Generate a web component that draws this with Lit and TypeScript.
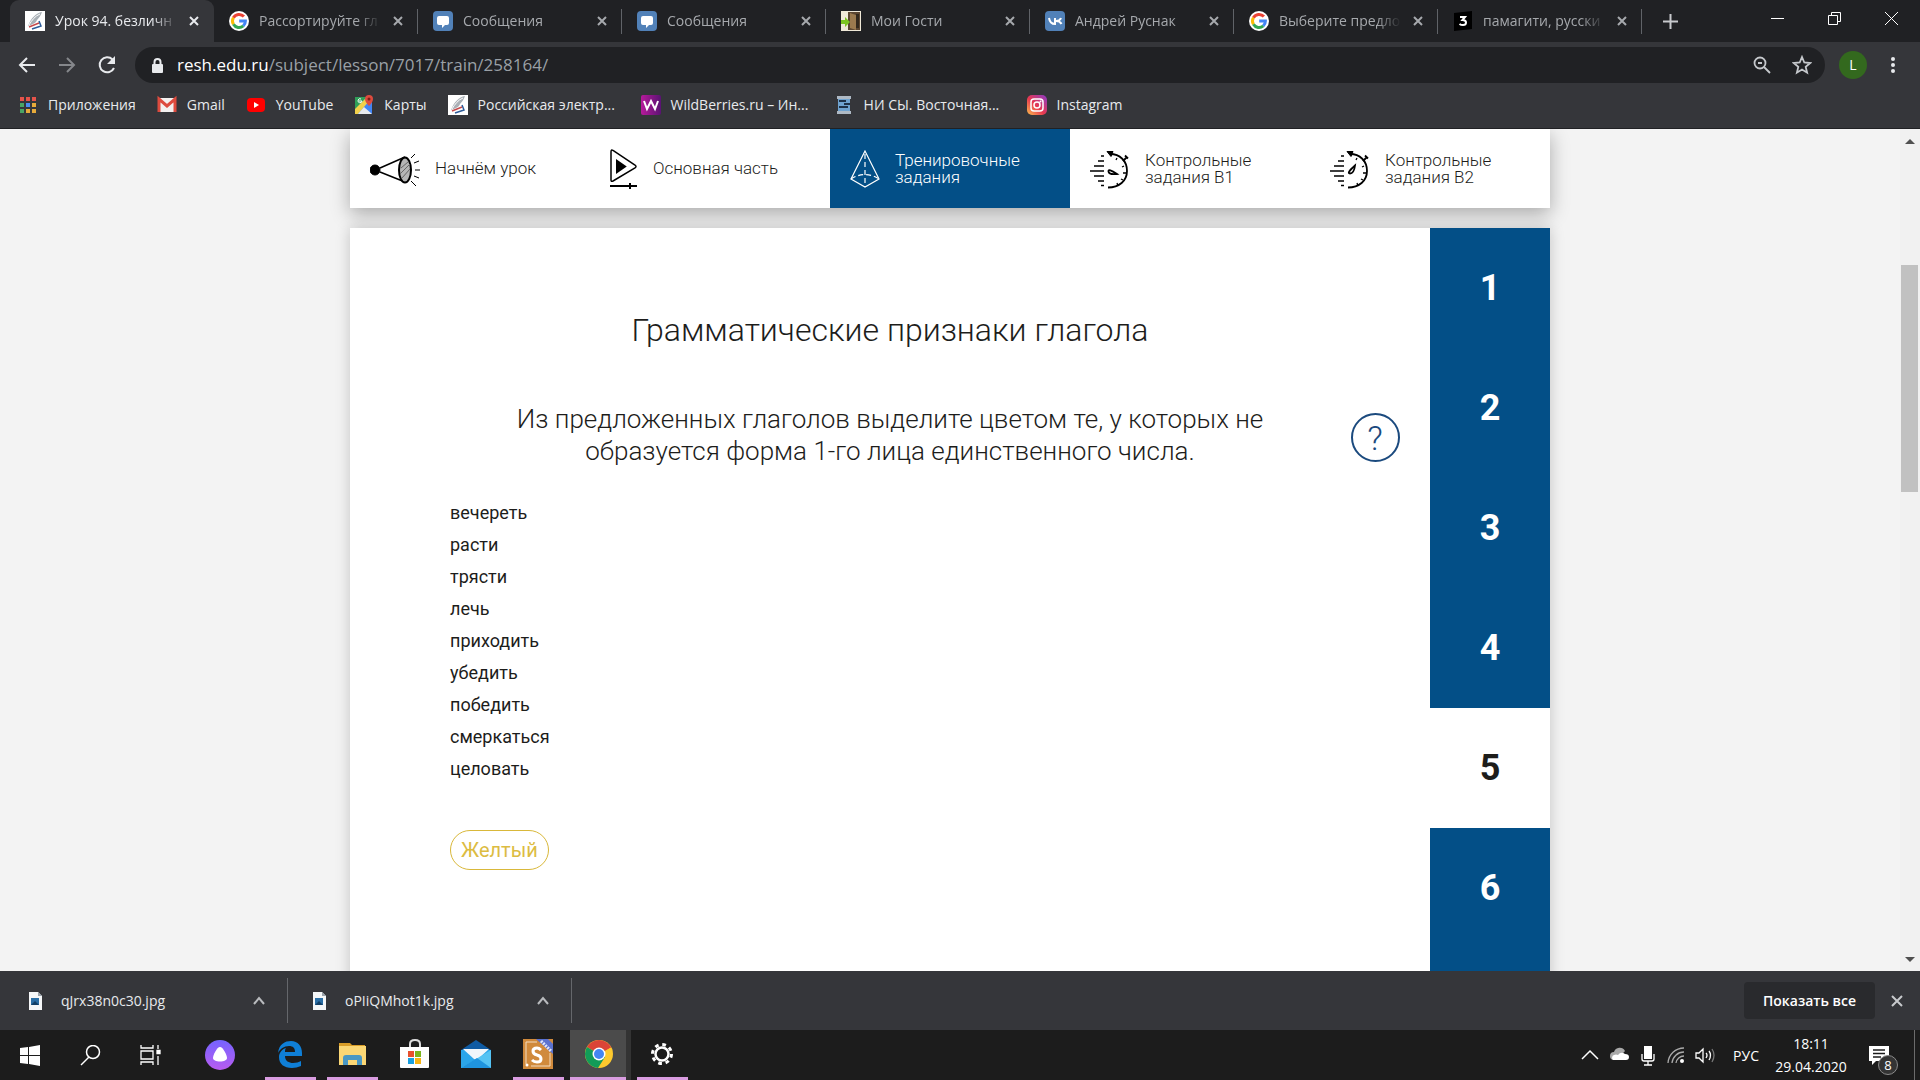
import { LitElement, html, css, svg } from "lit";
import { customElement, state } from "lit/decorators.js";
import { classMap } from "lit/directives/class-map.js";

const google = svg`<circle cx="10" cy="10" r="10" fill="#fff"/>
  <g fill="none" stroke-width="3">
    <path d="M14.9 5.6A6.5 6.5 0 0 0 4.4 6.7" stroke="#ea4335"/>
    <path d="M4.4 6.7a6.5 6.5 0 0 0 0 6.6" stroke="#fbbc05"/>
    <path d="M4.4 13.3a6.5 6.5 0 0 0 9.9 1.6" stroke="#34a853"/>
    <path d="M14.3 14.9A6.5 6.5 0 0 0 16.4 10H10.2" stroke="#4285f4"/>
  </g>`;
const resh = svg`<path d="M0 0h20v20H0z" fill="#fff"/>
  <path d="M17 1C11 2 6 7 3 15c5-2 8-3 9-6 2-2 4-5 5-8z" fill="#a9b0b6"/>
  <path d="M15 3C10 5 7 9 4 14" stroke="#fff" fill="none"/>
  <path d="M4 16l10-4" stroke="#c5484a" stroke-width="1.500"/>
  <path d="M7 18l9-3-2-5" stroke="#2d5c9a" stroke-width="1.500" fill="none"/>`;
const message = svg`<rect width="20" height="20" rx="4" fill="#5181b8"/>
  <path d="M6 5h8q2 0 2 2v5q0 2-2 2h-2l-3 3v-3H6q-2 0-2-2V7q0-2 2-2z" fill="#fff"/>`;
const door = svg`<path d="M0 0h20v20H0z" fill="#efe9d8"/><path d="M7 1h12v18H7z" fill="#5b4630"/>
  <path d="M9 2l6 2v15l-6-2z" fill="#9b7a4e"/><path d="M15 3h3v14h-3z" fill="#33291d"/>
  <path d="M0 9h4V6l5 5-5 5v-3H0z" fill="#7cc520"/>`;
const vk = svg`<rect width="20" height="20" rx="4" fill="#5181b8"/>
  <path d="M4 7q1 6 6 6V7M16 7q-1 3-5 3 4 0 5.500 3" fill="none" stroke="#fff" stroke-width="2"/>`;
const znanija = svg`<path d="M1 2l18-2v18L1 20z" fill="#000"/>
  <path d="M7 6h5L9.500 9q3.500 0 3.500 2.500T10 14q-2 0-3.500-1" fill="none" stroke="#fff" stroke-width="2"/>`;
const apps = svg`${["#e5534a", "#e5534a", "#e5534a", "#4aa564", "#4a8df0", "#e8ab3a", "#4aa564", "#e8ab3a", "#e8ab3a"].map(
  (c, i) => svg`<rect x=${2 + (i % 3) * 6} y=${2 + Math.floor(i / 3) * 6} width="4" height="4" fill=${c}/>`
)}`;
const gmail = svg`<rect x="1" y="3" width="18" height="14" rx="1" fill="#f3f0ef"/>
  <path d="M2 17V4l8 7 8-7v13" fill="none" stroke="#dd4b3e" stroke-width="3"/>`;
const youtube = svg`<rect x="1" y="3" width="18" height="14" rx="4" fill="#f00"/><path d="M8 7l5 3-5 3z" fill="#fff"/>`;
const maps = svg`<rect x="1" y="2" width="17" height="17" rx="1" fill="#4285f4"/>
  <path d="M1 2h12L1 15z" fill="#2f9e58"/><path d="M1 19v-5L13 2l3 3L4 19z" fill="#f2d04b"/>
  <path d="M4 19l6-7 8 7z" fill="#e8eaed"/><path d="M18 9v8l-6-6z" fill="#4285f4"/>
  <path d="M15 0a4 4 0 0 1 4 4q0 3-4 7-4-4-4-7a4 4 0 0 1 4-4z" fill="#dd4b3e"/><circle cx="15" cy="4" r="1.500" fill="#7d1f18"/>
  <path d="M5 6h3a2 2 0 1 1-1-2" fill="none" stroke="#fff"/>`;
const wildberries = svg`<defs><linearGradient id="wb"><stop stop-color="#b71a9b"/><stop offset="1" stop-color="#5a1373"/></linearGradient></defs>
  <rect width="20" height="20" rx="2" fill="url(#wb)"/>
  <path d="M3 6l3 8 4-8 4 8 3-8" fill="none" stroke="#fff" stroke-width="2"/>`;
const scroll = svg`<path d="M3 1h14v3H3zM3 16h14v3H3z" fill="#aeb9c4"/><path d="M4 4h12v12H4z" fill="#6fa3d0"/>
  <path d="M5 6h7M10 9h6M5 12h9" stroke="#1e3248" stroke-width="2"/>`;
const instagram = svg`<defs><linearGradient id="ig" x1="0" y1="1" x2="1" y2="0"><stop stop-color="#fdc04d"/><stop offset=".45" stop-color="#e8384f"/><stop offset="1" stop-color="#8a3ac8"/></linearGradient></defs>
  <rect width="20" height="20" rx="5" fill="url(#ig)"/>
  <g fill="none" stroke="#fff" stroke-width="1.500"><rect x="4" y="4" width="12" height="12" rx="3"/><circle cx="10" cy="10" r="3"/></g><circle cx="13.500" cy="6.500" r="1" fill="#fff"/>`;
const imageFile = svg`<path d="M4 1h9l4 4v14H4z" fill="#f5f7f8"/><path d="M13 1l4 4h-4z" fill="#9aa3ab"/>
  <path d="M6 7h8v7H6z" fill="#2a6ea5"/><path d="M6 14l4-4 4 4z" fill="#123f66"/>`;

const megaphone = svg`<g stroke="#000" fill="none"><circle cx="5" cy="21" r="5" fill="#000"/>
  <path d="M10 19L35 8M10 23l25 10" stroke-width="1.500"/><ellipse cx="35" cy="21" rx="6" ry="12.500" fill="#b5b5b5" stroke-width="2"/>
  <path d="M31 19l7-6M30 25l10-10M32 29l8-9" stroke="#666"/>
  <path d="M41 9l4-4M44 14l5-2M45 21h5M44 27l5 2M41 32l5 5"/></g>`;
const player = svg`<g stroke="#000" fill="none"><path d="M1 3v28q0 2 2 1L25 19q2-1.500 0-3L3 1.500Q1 0 1 3z" stroke-width="1.500"/>
  <path d="M7 12v11l8-5.500z" fill="#000" stroke-width="2"/><path d="M0 37h27M20 34v6" stroke-width="2"/></g>`;
const pyramid = svg`<g stroke="#fff" fill="none" stroke-width="1.200"><path d="M15 2L1 30l14 8 14-8z"/>
  <path d="M15 5v33M1 30q14-9 28 0" stroke-dasharray="5 3"/></g>`;
const timer = (hand: unknown) => svg`<g stroke="#000" fill="none" stroke-width="1.800">
  <path d="M20 5C30 5 37 12 37 22S29 38.500 18 38.500"/><path d="M17 2.500h6l-2 5z" fill="#000" stroke-width="1"/><path d="M33 12l4-4M35 6.500l3 3"/>
  <path d="M11 7h3M8 12h6M4 17h10M0 22h14M4 27h10M8 32h6M11 36.500h3" stroke-width="1.600"/>
  <path d="M27 9l-1 2M34 17l-2 1M36 24h-3M33 31l-2-1M28 37l-1-3" stroke-width="1.300"/>${hand}</g>`;
const timer1 = timer(svg`<path d="M27 25q-8 1-8.500-2.500t8.500 2.500z"/>`);
const timer2 = timer(svg`<path d="M25 16.500q-1 8-5 8t5-8z"/>`);

const start = svg`<path d="M0 3l8-1v8H0zM9 2l11-2v10H9zM0 11h8v8l-8-1zM9 11h11v10L9 19z" fill="#fff"/>`;
const search = svg`<g fill="none" stroke="#fff" stroke-width="1.500"><circle cx="13" cy="7" r="6.500"/><path d="M9 12l-8 8"/></g>`;
const taskView = svg`<g fill="none" stroke="#fff" stroke-width="1.300"><path d="M1 0v3h12V0M1 20v-3h12v3M1 6h12v8H1zM18 0v4M18 11v9"/><path d="M17 5.500h3v3h-3z" fill="#fff"/></g>`;
const alice = svg`<defs><linearGradient id="al" x1="0" y1="0" x2="0" y2="1"><stop stop-color="#7563ff"/><stop offset="1" stop-color="#b85cf0"/></linearGradient></defs>
  <circle cx="15" cy="15" r="15" fill="url(#al)"/><path d="M15 7c3 0 7 8 7 11 0 2-3 3.500-7 3.500S8 20 8 18c0-3 4-11 7-11z" fill="#fff"/>`;
const edge = svg`<path d="M3 14C4 5 10 2 16 2c7 0 11 5 11 12v3H10c0 5 4 7 8 7 3 0 6-1 8-2v5c-3 1-6 2-9 2-8 0-13-4-13-11 0-4 3-8 7-9-1 1-1 3-1 4h10c0-4-2-6-6-6-5 0-9 3-11 7z" fill="#0f7fd7"/>`;
const explorer = svg`<path d="M1 4h11l2 2h13v5H1z" fill="#d99d28"/><path d="M1 7h27v19H1z" fill="#fbd775"/>
  <path d="M5 26v-7q0-3 3-3h13q3 0 3 3v7h-5v-5h-9v5z" fill="#4a98c4"/>`;
const store = svg`<path d="M10 8V5q0-4 5-4t5 4v3" fill="none" stroke="#ddd" stroke-width="2"/>
  <path d="M0 8h29v20q0 1-1 1H1q-1 0-1-1z" fill="#fff"/><path d="M8 12h6v6H8z" fill="#e8502d"/><path d="M15 12h6v6h-6z" fill="#7ab51d"/>
  <path d="M8 19h6v6H8z" fill="#19a0e0"/><path d="M15 19h6v6h-6z" fill="#f8b414"/>`;
const mail = svg`<path d="M0 11L15 1l15 10v3H0z" fill="#0f5ba3"/><path d="M0 11h30v18H0z" fill="#2ba6ea"/>
  <path d="M2 10h26L17 20q-2 1-4 0z" fill="#f0f6fb"/><path d="M0 29L30 11v18z" fill="#55c3f3"/><path d="M0 29l16-10 14 10z" fill="#1f94de"/>`;
const sTile = svg`<path d="M0 0h30v30H0z" fill="#d08a3c"/><path d="M14 3H3v22M8 27h19V14" fill="none" stroke="#f2dcc0"/><circle cx="4" cy="26" r="1.500" fill="#fff"/>
  <path d="M18 11q-2-2-4-2-4 0-4 3t4 4q4 1 4 4t-4 3q-3 0-5-2" fill="none" stroke="#fff" stroke-width="3"/>
  <path d="M13 0h12l5 5v10z" fill="#5b72cf"/><path d="M18 2l10 10" stroke="#dfe5fb" stroke-width="3" stroke-dasharray="2 1"/>`;
const chrome = svg`<circle cx="14" cy="14" r="14" fill="#fdc92e"/><path d="M14 14L1.900 7A14 14 0 0 1 26.100 7z" fill="#db4437"/>
  <path d="M14 14v-7h12.500" fill="#db4437"/><path d="M14 14L1.900 7A14 14 0 0 0 13 28l7-11z" fill="#129c58"/>
  <circle cx="14" cy="14" r="6.500" fill="#fff"/><circle cx="14" cy="14" r="5" fill="#4486f2"/>`;
const gear = svg`<g fill="none" stroke="#fff"><circle cx="11" cy="11" r="6.500" stroke-width="2.500"/>
  <circle cx="11" cy="11" r="9.500" stroke-width="3" stroke-dasharray="3.700 3.760"/></g>`;

const cross = svg`<path d="M3 3l8 8M11 3l-8 8" stroke="currentColor" stroke-width="2" fill="none"/>`;
const chevron = svg`<path d="M2 10l5-6 5 6" stroke="currentColor" stroke-width="2" fill="none"/>`;

const icon = (body: unknown, w: number, h = w) =>
  html`<svg class="icon" viewBox="0 0 ${w} ${h}" width=${w} height=${h} aria-hidden="true">${body}</svg>`;

@customElement("browser-chrome")
class BrowserChrome extends LitElement {
  static styles = css`
    :host { display: block; background: #35363a; color: #e8eaed; font: 15px/20px "Open Sans", "Noto Sans", sans-serif; }
    button { background: none; border: 0; padding: 0; margin: 0; color: inherit; font: inherit; display: grid; place-items: center; }
    .icon { flex: none; display: block; }
    .strip { background: #202124; height: 42px; display: flex; padding-left: 10px; }
    .tab { flex: 0 1 204px; min-width: 0; box-sizing: border-box; display: flex; align-items: center; gap: 10px;
      padding: 0 13px 0 15px; color: #a6a9ad; position: relative; font-size: 14px; }
    .tab.on { background: #35363a; color: #e8eaed; border-radius: 9px 9px 0 0; }
    .tab.ruled::after { content: ""; position: absolute; right: 0; top: 9px; height: 25px; width: 1px; background: #606368; }
    .name { flex: 1; overflow: hidden; white-space: nowrap; mask-image: linear-gradient(90deg, #000 80%, transparent); }
    .add { width: 56px; }
    .win { margin-left: auto; display: flex; color: #fff; }
    .win button { width: 57px; height: 36px; }
    .bar { height: 46px; display: flex; align-items: center; padding: 0 13px 0 7px; }
    .nav { width: 40px; height: 40px; }
    .nav.dim { color: #85878b; }
    .address { flex: 1; height: 36px; border-radius: 18px; background: #202124; display: flex; align-items: center;
      gap: 12px; margin: 0 14px 0 8px; padding: 0 9px 0 15px; }
    .url { flex: 1; display: flex; font-size: 17px; color: #9aa0a6; }
    .host { color: #fff; }
    .tool { width: 28px; height: 28px; color: #c5c8cc; }
    .avatar { width: 28px; height: 28px; border-radius: 50%; background: #33691e; color: #fff; font-size: 14px; }
    .menu { width: 28px; height: 28px; margin-left: 12px; }
    .marks { height: 34px; display: flex; align-items: center; gap: 21px; padding: 0 18px 6px; border-bottom: 1px solid #202124; }
    .mark { display: flex; align-items: center; gap: 10px; color: inherit; text-decoration: none; white-space: nowrap; font-size: 14px; }
    .mark.long { min-width: 172px; }
  `;
  tabs: [string, unknown][] = [
    ["Урок 94. безличн", resh],
    ["Рассортируйте гл", google],
    ["Сообщения", message],
    ["Сообщения", message],
    ["Мои Гости", door],
    ["Андрей Руснак", vk],
    ["Выберите предло", google],
    ["памагити, русски", znanija],
  ];
  marks: [string, unknown][] = [
    ["Приложения", apps],
    ["Gmail", gmail],
    ["YouTube", youtube],
    ["Карты", maps],
    ["Российская электр...", resh],
    ["WildBerries.ru – Ин...", wildberries],
    ["НИ СЫ. Восточная...", scroll],
    ["Instagram", instagram],
  ];
  render() {
    return html`
      <div class="strip">
        ${this.tabs.map(
          ([name, mark], i) => html`<div class=${classMap({ tab: true, on: i === 0, ruled: i > 0 })}>
            ${icon(mark, 20)}<span class="name">${name}</span>
            <button aria-label="Закрыть вкладку">${icon(cross, 14)}</button>
          </div>`
        )}
        <button class="add" aria-label="Новая вкладка">${icon(svg`<path d="M7.500 0v15M0 7.500h15" stroke="#c8cacd" stroke-width="2"/>`, 15)}</button>
        <div class="win">
          <button aria-label="Свернуть">${icon(svg`<path d="M0 6.500h13" stroke="#fff"/>`, 13)}</button>
          <button aria-label="Восстановить">${icon(svg`<path d="M.5 3.500h9v9h-9zM3.500 3.500v-3h9v9h-3" fill="none" stroke="#fff"/>`, 13)}</button>
          <button aria-label="Закрыть">${icon(svg`<path d="M0 0l13 13M13 0L0 13" stroke="#fff"/>`, 13)}</button>
        </div>
      </div>
      <div class="bar">
        <button class="nav" aria-label="Назад">${icon(svg`<path d="M18 10H3M10 3l-7 7 7 7" fill="none" stroke="currentColor" stroke-width="2"/>`, 20)}</button>
        <button class="nav dim" aria-label="Вперёд">${icon(svg`<path d="M2 10h15M10 3l7 7-7 7" fill="none" stroke="currentColor" stroke-width="2"/>`, 20)}</button>
        <button class="nav" aria-label="Обновить">${icon(svg`<path d="M17 13a7.500 7.500 0 1 1-1.500-8.500" fill="none" stroke="currentColor" stroke-width="2"/><path d="M18 1v8h-8z" fill="currentColor"/>`, 20)}</button>
        <div class="address">
          ${icon(svg`<rect x="2" y="6" width="11" height="9" rx="1" fill="#e8eaed"/><path d="M4.500 7V4a3 3 0 0 1 6 0v3" fill="none" stroke="#e8eaed" stroke-width="2"/>`, 15)}
          <div class="url"><span class="host">resh.edu.ru</span><span>/subject/lesson/7017/train/258164/</span></div>
          <button class="tool" aria-label="Масштаб">${icon(svg`<g fill="none" stroke="currentColor" stroke-width="1.800"><circle cx="7" cy="7" r="5.500"/><path d="M11 11l6 6M5 7h4"/></g>`, 18)}</button>
          <button class="tool" aria-label="Добавить в закладки">${icon(svg`<path d="M10 2l2.300 5.500 5.900.5-4.500 3.900 1.400 5.800-5.100-3.100-5.100 3.100 1.400-5.800L1.800 8l5.900-.5z" fill="none" stroke="currentColor" stroke-width="1.800"/>`, 20)}</button>
        </div>
        <button class="avatar" aria-label="Профиль">L</button>
        <button class="menu" aria-label="Меню">${icon(svg`<g fill="#e8eaed"><circle cx="9" cy="3" r="2"/><circle cx="9" cy="9" r="2"/><circle cx="9" cy="15" r="2"/></g>`, 18)}</button>
      </div>
      <nav class="marks">
        ${this.marks.map(
          ([name, mark]) => html`<a class=${classMap({ mark: true, long: name.endsWith("...") })} href="#">${icon(mark, 20)}${name}</a>`
        )}
      </nav>
    `;
  }
}

@customElement("lesson-page")
class LessonPage extends LitElement {
  static styles = css`
    :host { display: flex; min-height: 0; overflow: hidden; background: #f3f3f3; color: #1d1d1b; font: 18px/32px Roboto, sans-serif; }
    .icon { display: block; flex: none; }
    .view { flex: 1; min-width: 0; display: flex; flex-direction: column; align-items: center; gap: 20px; overflow: hidden; }
    .steps, .card { width: 100%; max-width: 1200px; background: #fff; }
    .steps { display: grid; grid-template-columns: repeat(5, 1fr); box-shadow: 0 6px 18px rgba(0, 0, 0, .3); flex: none; }
    .step { height: 79px; box-sizing: border-box; display: flex; align-items: center; gap: 15px; padding: 0 20px;
      color: #1d1d1b; text-decoration: none; font-weight: 300; font-size: 17px; line-height: 17px; }
    .step.on { background: #034f87; color: #fff; }
    .card { flex: 1; display: flex; box-shadow: 0 0 14px rgba(0, 0, 0, .2); }
    .task { flex: 1; display: grid; grid-template-columns: 100px 1fr 100px; align-content: start; padding-top: 80px; }
    .title, .prompt { grid-column: 2; margin: 0; text-align: center; font-weight: 300; }
    .title { font-size: 32px; line-height: 44px; margin-bottom: 51px; }
    .prompt { font-size: 26px; line-height: 32px; padding: 0 60px; }
    .help { grid-column: 3; justify-self: center; align-self: center; width: 49px; height: 49px; margin: 5px 10px 0 0; padding: 0; border: 2px solid #1b4a7e; border-radius: 50%;
      background: none; color: #1b4a7e; font: 34px/44px Roboto, sans-serif; font-weight: 300; }
    .words { grid-column: 2; list-style: none; margin: 30px 0 45px; padding: 0; }
    .word { background: none; border: 0; padding: 0; margin: 0; display: block; font: inherit; color: inherit; }
    .swatch { grid-column: 2; justify-self: start; height: 40px; padding: 0 10px; border: 1px solid #d9b83a; border-radius: 20px;
      background: none; color: #dcbc42; font: 20px/38px Roboto, sans-serif; }
    .numbers { width: 120px; display: flex; flex-direction: column; background: #034f87; overflow: hidden; }
    .number { flex: none; height: 120px; border: 0; padding: 0; background: none; color: #fff; font: 700 36px/48px Roboto, sans-serif; }
    .number.on { background: #fff; color: #1d1d1b; }
    .scroller { width: 19px; padding-right: 1px; background: #f1f1f1; display: flex; flex-direction: column; align-items: center; }
    .thumb { width: 17px; height: 227px; background: #c1c1c1; margin-top: 112px; }
    .down { margin-top: auto; }
    .arrow { display: grid; place-items: center; height: 24px; }
  `;
  @state() current = 5;
  steps: [unknown, number, string[]][] = [
    [megaphone, 50, ["Начнём урок"]],
    [player, 28, ["Основная часть"]],
    [pyramid, 30, ["Тренировочные", "задания"]],
    [timer1, 40, ["Контрольные", "задания В1"]],
    [timer2, 40, ["Контрольные", "задания В2"]],
  ];
  words = ["вечереть", "расти", "трясти", "лечь", "приходить", "убедить", "победить", "смеркаться", "целовать"];
  render() {
    return html`
      <main class="view">
        <nav class="steps">
          ${this.steps.map(
            ([art, w, lines], i) => html`<a href="#" class=${classMap({ step: true, on: i === 2 })}>
              ${icon(art, w, 40)}
              <span>${lines.map((l, n) => (n ? html`<br />${l}` : l))}</span>
            </a>`
          )}
        </nav>
        <section class="card">
          <div class="task">
            <h1 class="title">Грамматические признаки глагола</h1>
            <p class="prompt">Из предложенных глаголов выделите цветом те, у которых не образуется форма 1-го лица единственного числа.</p>
            <button class="help" aria-label="Подсказка">?</button>
            <ul class="words">
              ${this.words.map((w) => html`<li><button class="word">${w}</button></li>`)}
            </ul>
            <button class="swatch">Желтый</button>
          </div>
          <nav class="numbers">
            ${[1, 2, 3, 4, 5, 6, 7].map(
              (n) => html`<button class=${classMap({ number: true, on: n === this.current })} @click=${() => (this.current = n)}>${n}</button>`
            )}
          </nav>
        </section>
      </main>
      <div class="scroller">
        <span class="arrow">${icon(svg`<path d="M0 5l5-5 5 5z" fill="#505050"/>`, 10, 5)}</span>
        <div class="thumb"></div>
        <span class="arrow down">${icon(svg`<path d="M0 0l5 5 5-5z" fill="#505050"/>`, 10, 5)}</span>
      </div>
    `;
  }
}

@customElement("download-shelf")
class DownloadShelf extends LitElement {
  static styles = css`
    :host { display: flex; height: 59px; background: #35363a; color: #e8eaed; align-items: center; font: 14px/20px "Open Sans", "Noto Sans", sans-serif; }
    button { background: none; border: 0; padding: 0; color: inherit; font: inherit; }
    .icon { display: block; }
    .item { box-sizing: border-box; width: 284px; height: 45px; display: flex; align-items: center; gap: 16px; padding: 0 21px; border-right: 1px solid #65676b; }
    .item:first-child { width: 288px; padding-left: 25px; }
    .more { margin-left: auto; color: #b9bbbe; }
    .all { margin-left: auto; width: 131px; height: 37px; border-radius: 4px; background: #292a2d; font-weight: 600; color: #fff; }
    .close { margin: 0 16px 0 15px; color: #c8cacd; }
  `;
  render() {
    return html`
      ${["qJrx38n0c30.jpg", "oPIiQMhot1k.jpg"].map(
        (f) => html`<div class="item">${icon(imageFile, 20)}<span>${f}</span><button class="more" aria-label="Действия">${icon(chevron, 14)}</button></div>`
      )}
      <button class="all">Показать все</button>
      <button class="close" aria-label="Закрыть">${icon(svg`<path d="M2 2l10 10M12 2L2 12" stroke="currentColor" stroke-width="2"/>`, 14)}</button>
    `;
  }
}

@customElement("task-bar")
class TaskBar extends LitElement {
  static styles = css`
    :host { display: flex; height: 50px; background: #1c1c1c; color: #fff; font: 14px/23px "Open Sans", "Noto Sans", sans-serif; }
    button { background: none; border: 0; padding: 0; margin: 0; color: inherit; font: inherit; }
    .icon { display: block; }
    .sys { width: 60px; display: grid; place-items: center; }
    .alice { width: 79px; }
    .app { width: 62px; display: grid; grid-template-rows: 1fr 3px; justify-items: center; align-items: center; }
    .app.run::after { content: ""; width: 51px; height: 3px; background: #d99ce0; }
    .app.on { background: linear-gradient(90deg, #4b4b4b 56px, #333 56px 61px, #1c1c1c 61px); justify-items: start; margin-left: 1px; width: 61px; }
    .app.on::after { width: 56px; }
    .app.on .icon { margin-left: 15px; }
    .tray { margin-left: auto; display: flex; align-items: center; gap: 10px; }
    .lang { margin: 0 4px 0 7px; }
    .clock { width: 76px; text-align: center; margin-right: 8px; }
    .note { width: 44px; height: 50px; display: grid; place-items: center; position: relative; margin-right: 13px; }
    .badge { position: absolute; left: 21px; top: 25px; width: 18px; height: 18px; border: 1px solid #8a8a8a; border-radius: 50%; background: #343434; font: 13px/18px "Open Sans", sans-serif; }
    .peek { width: 5px; height: 50px; border-left: 1px solid #6b6b6b; }
  `;
  apps: [string, unknown, number, string][] = [
    ["Edge", edge, 30, "run"],
    ["Проводник", explorer, 29, "run"],
    ["Магазин", store, 29, ""],
    ["Почта", mail, 30, ""],
    ["S", sTile, 30, "run"],
    ["Chrome", chrome, 28, "run on"],
    ["Параметры", gear, 22, "run"],
  ];
  render() {
    return html`
      <button class="sys" aria-label="Пуск">${icon(start, 20, 21)}</button>
      <button class="sys" aria-label="Поиск">${icon(search, 21)}</button>
      <button class="sys" aria-label="Представление задач">${icon(taskView, 21)}</button>
      <button class="sys alice" aria-label="Алиса">${icon(alice, 30)}</button>
      ${this.apps.map(([name, art, size, mode]) => html`<button class="app ${mode}" aria-label=${name}>${icon(art, size)}</button>`)}
      <div class="tray">
        ${icon(svg`<path d="M1 13l8-8 8 8" fill="none" stroke="#fff" stroke-width="1.500"/>`, 18)}
        ${icon(svg`<path d="M5 15a4 4 0 0 1 0-8 6 6 0 0 1 11-1l-8 9z" fill="#a9a9a9"/><path d="M4 15a3 3 0 0 1 1-5q2-1 4 0 3-4 7-1 4 0 4 3t-3 3z" fill="#fff"/>`, 20)}
        ${icon(svg`<path d="M5 1h8v13H5z" fill="#fff"/><path d="M3 9v5q0 2 2 2h8q2 0 2-2V9M9 16v4M5 20h8" fill="none" stroke="#fff" stroke-width="1.300"/>`, 18, 21)}
        ${icon(svg`<g fill="none" stroke="#aaa" stroke-width="1.300"><path d="M1 17A16 16 0 0 1 17 2"/><path d="M5 17A12 12 0 0 1 17 6"/><path d="M9 17a8 8 0 0 1 8-7"/></g><circle cx="15" cy="15" r="2" fill="#fff"/>`, 18)}
        ${icon(svg`<g fill="none" stroke="#fff" stroke-width="1.300"><path d="M1 7h3l4-4v13l-4-4H1zM11 7q2 2 0 5M14 5q3 4 0 9"/><path d="M17 3q4 6 0 13" stroke="#777"/></g>`, 21, 19)}
        <span class="lang">РУС</span>
        <div class="clock">18:11<br />29.04.2020</div>
      </div>
      <button class="note" aria-label="Уведомления">
        ${icon(svg`<path d="M0 1h20v15H7l-4 4v-4H0z" fill="#fff"/><path d="M4 5h12M4 8.500h12M4 12h8" stroke="#1c1c1c" stroke-width="1.300"/>`, 20)}
        <span class="badge">8</span>
      </button>
      <div class="peek"></div>
    `;
  }
}

@customElement("app-root")
class AppRoot extends LitElement {
  static styles = css`
    :host { display: grid; grid-template-rows: auto minmax(0, 1fr) auto auto; grid-template-columns: minmax(0, 1fr); height: 100vh; overflow: hidden; }
  `;
  render() {
    return html`<browser-chrome></browser-chrome><lesson-page></lesson-page><download-shelf></download-shelf><task-bar></task-bar>`;
  }
}
